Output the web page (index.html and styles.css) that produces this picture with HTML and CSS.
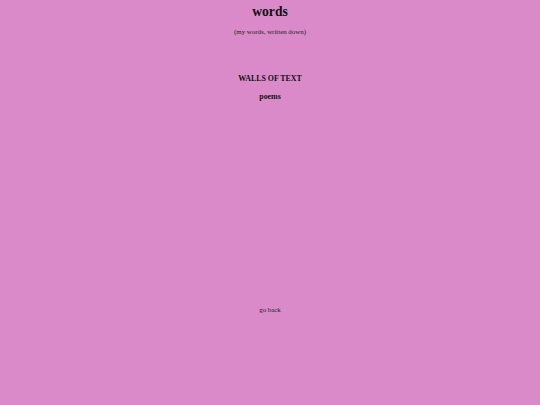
FILE: index.html
```html
<!DOCTYPE html>
<html>
<head>
<meta charset="utf-8">
<title>words</title>
<link rel="stylesheet" href="styles.css">
</head>
<body>
<div class="page">
  <h1 class="title">words</h1>
  <p class="subtitle">(my words, written down)</p>
  <h3 class="section">WALLS OF TEXT</h3>
  <h3 class="link-head">poems</h3>
  <p class="back">go back</p>
</div>
</body>
</html>
```
FILE: styles.css
```css
html, body {
  margin: 0;
  padding: 0;
  background: #da8ac8;
}
body {
  font-family: "Liberation Serif", "Times New Roman", serif;
  color: #111;
}
.page {
  display: flex;
  flex-direction: column;
  align-items: center;
  text-align: center;
}
.title {
  margin: 4px 0 0;
  font-size: 13.6px;
  line-height: 16px;
  font-weight: bold;
}
.subtitle {
  margin: 8px 0 0;
  font-size: 6.9px;
  line-height: 8px;
  color: #222;
}
.section {
  margin: 38px 0 0;
  font-size: 7.9px;
  line-height: 10px;
  font-weight: bold;
}
.link-head {
  margin: 8px 0 0;
  font-size: 7.9px;
  line-height: 10px;
  font-weight: bold;
}
.back {
  margin: 204px 0 0;
  font-size: 6.9px;
  line-height: 8px;
  color: #222;
}
```
